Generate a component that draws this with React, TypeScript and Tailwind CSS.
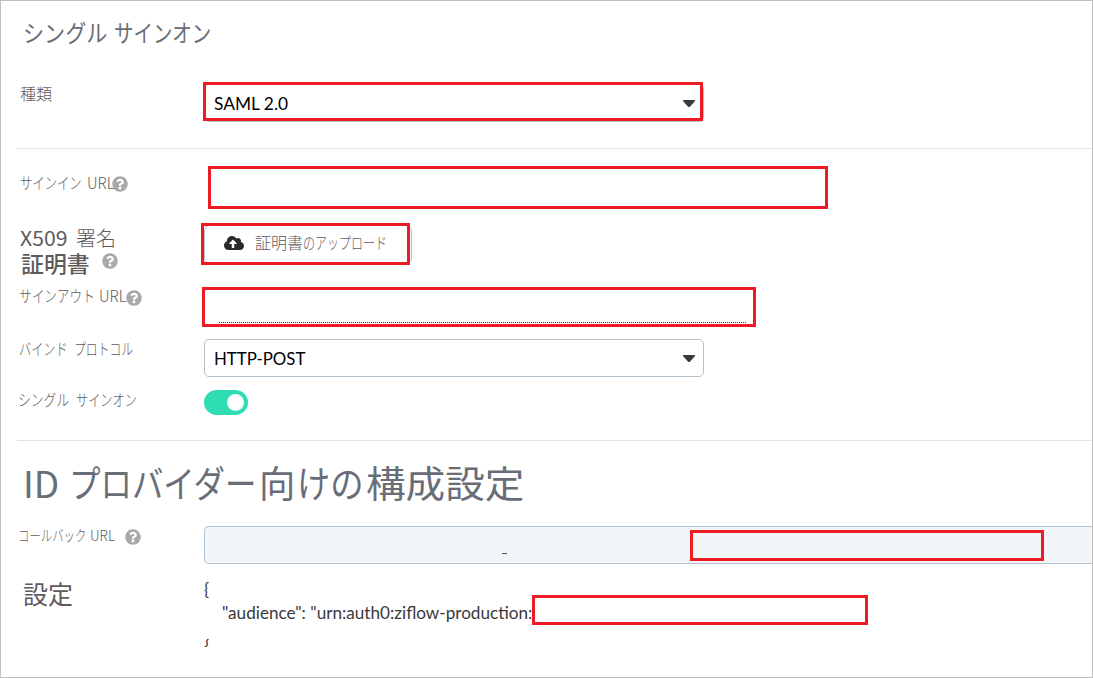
import type { ReactNode } from "react";
import { FaCloudUploadAlt, FaQuestionCircle } from "react-icons/fa";

function Text({ box, ink, children }: { box: string; ink: string; children: ReactNode }) {
  return (
    <span className={`block shrink-0 ${box}`}>
      <span className={`inline-block origin-left whitespace-nowrap ${ink}`}>{children}</span>
    </span>
  );
}

function Help({ className }: { className: string }) {
  return <FaQuestionCircle className={`size-4 shrink-0 text-[#a9a9a9] ${className}`} />;
}

function Caret() {
  return (
    <svg className="mt-px mr-2 h-[7px] w-3" viewBox="0 0 12 7" fill="#3a3a3c">
      <path d="M0 0h12v1L6.7 7H5.3L0 1z" />
    </svg>
  );
}

function Select({ value, ink, marked }: { value: string; ink: string; marked?: boolean }) {
  return (
    <div className="relative flex h-[38px] w-[500px] items-center justify-between rounded-[5px] border border-[#b3c1cd] bg-white pl-[9px] font-['Lato'] text-[17px] leading-[36px] font-normal text-black">
      <span className={`mt-px inline-block origin-left ${ink}`}>{value}</span>
      <Caret />
      {marked && <div className="absolute -top-[3px] -left-[2px] h-[39px] w-[500px] border-3 border-[#ed1c24]" />}
    </div>
  );
}

export default function App() {
  return (
    <main className="flex h-[678px] w-[1093px] flex-col overflow-hidden border border-[#c0c0c0] bg-white font-['Noto_Sans_CJK_JP','Liberation_Sans',sans-serif] font-light text-[#5f5a5c]">
      <h1 className="flex h-[82px] pt-[13px] pl-[22px] text-[24px] leading-9 font-normal text-[#696d78]">
        <Text box="w-[91px]" ink="scale-x-[0.88]">シングル</Text>
        <Text box="w-[110px]" ink="scale-x-[0.81]">サインオン</Text>
      </h1>

      <section className="ml-4 flex h-[66px] border-b border-[#dce4ea]">
        <div className="-mt-[2px] w-[187px] pl-[3px] text-[16px] leading-6">種類</div>
        <div className="pt-px">
          <Select value="SAML 2.0" ink="scale-x-[1.02]" marked />
        </div>
      </section>

      <section className="ml-4 flex h-[292px] flex-col border-b border-[#dce4ea]">
        <div className="flex h-[57px] pt-[17px]">
          <div className="flex w-[191px] pt-[4px] pl-[3px] text-[16px] leading-6">
            <Text box="w-[67px]" ink="scale-x-[0.77]">サインイン</Text>
            <Text box="w-[25px]" ink="scale-x-[0.94]">URL</Text>
            <Help className="mt-[6px]" />
          </div>
          <div className="h-[43px] w-[620px] border-3 border-[#ed1c24]" />
        </div>

        <div className="mt-[17px] flex h-[64px]">
          <div className="w-[184px] pt-[2px] pl-[3px]">
            <div className="flex h-[25px] text-[20px] leading-[26px]">
              <Text box="w-[56px]" ink="font-normal scale-x-[1.06]">X509</Text>
              <Text box="w-[42px]" ink="">署名</Text>
            </div>
            <div className="flex h-[27px] pl-px text-[22px] leading-[25px] font-medium">
              <Text box="w-[81px]" ink="scale-x-[1.04]">証明書</Text>
              <Help className="mt-[3px]" />
            </div>
          </div>
          <div className="relative pt-[2px] pl-[3px]">
            <button className="flex h-[39px] w-[208px] rounded-[6px] border border-[#b3c1cd] pl-[19px] text-[16px] leading-[33px] font-light">
              <FaCloudUploadAlt className="mt-[9px] mr-[11px] h-4 w-5 shrink-0 text-[#29292b]" />
              <Text box="w-[48px]" ink="">証明書</Text>
              <Text box="w-[84px]" ink="scale-x-[0.75]">のアップロード</Text>
            </button>
            <div className="absolute top-0 left-0 h-[42px] w-[209px] border-3 border-[#ed1c24]" />
          </div>
        </div>

        <div className="flex h-[52px]">
          <div className="flex w-[185px] pl-[2px] text-[16px] leading-[17px]">
            <Text box="w-[80px]" ink="scale-x-[0.79]">サインアウト</Text>
            <Text box="w-[27px]" ink="scale-x-[0.94]">URL</Text>
            <Help className="mt-[3px]" />
          </div>
          <div className="flex h-10 w-[554px] items-end border-3 border-[#ed1c24] pb-px pl-[14px]">
            <div className="h-px w-[528px] bg-[repeating-linear-gradient(90deg,#333_0_1px,transparent_1px_2px)]" />
          </div>
        </div>

        <div className="flex h-[51px]">
          <div className="flex w-[187px] pl-[2px] text-[16px] leading-[19px]">
            <Text box="w-[55px]" ink="scale-x-[0.76]">バインド</Text>
            <Text box="w-[61px]" ink="scale-x-[0.74]">プロトコル</Text>
          </div>
          <Select value="HTTP-POST" ink="scale-x-[0.99]" />
        </div>

        <div className="flex h-[50px]">
          <div className="flex w-[187px] pl-px text-[16px] leading-[19px]">
            <Text box="w-[58px]" ink="scale-x-[0.8]">シングル</Text>
            <Text box="w-[62px]" ink="scale-x-[0.76]">サインオン</Text>
          </div>
          <div className="flex h-[25px] w-11 items-center justify-end rounded-full bg-[#2fddb2] pr-1">
            <div className="size-[17px] rounded-full bg-white" />
          </div>
        </div>
      </section>

      <h2 className="flex h-[85px] shrink-0 pt-[14px] pl-[22px] text-[37px] leading-[54px] font-normal text-[#696d78]">
        <Text box="w-[46px]" ink="scale-x-[1.0]">ID</Text>
        <Text box="w-[190px]" ink="scale-x-[0.85]">プロバイダー</Text>
        <Text box="w-[38px]" ink="scale-x-[0.98]">向</Text>
        <Text box="w-[69px]" ink="scale-x-[0.9]">けの</Text>
        <Text box="w-[160px]" ink="scale-x-[1.07]">構成設定</Text>
      </h2>

      <section className="ml-4 flex h-[53px] shrink-0">
        <div className="flex w-[187px] pl-[1px] text-[15px] leading-[18px]">
          <Text box="w-[72px]" ink="scale-x-[0.76]">コールバック</Text>
          <Text box="w-[35px]" ink="scale-x-[0.91]">URL</Text>
          <Help className="mt-[3px]" />
        </div>
        <div className="relative h-[38px] flex-1 rounded-l-[5px] border border-r-0 border-[#b3c1cd] bg-[#f2f6f9]">
          <span className="absolute top-[26px] left-[297px] h-px w-[5px] bg-[#555]" />
          <div className="absolute top-[3px] left-[485px] h-[31px] w-[354px] border-3 border-[#ed1c24]" />
        </div>
      </section>

      <section className="ml-4 flex">
        <div className="w-[186px] pt-px pl-[6px] text-[25px] leading-[27px] font-normal">設定</div>
        <div className="-mt-px font-['Lato'] text-[17px] leading-[23px] font-normal text-[#39393c]">
          <div className="h-[23px] pl-px">{"{"}</div>
          <div className="relative flex h-[23px] pl-[19px]">
            <Text box="w-[314px]" ink="scale-x-[1.008]">"audience": "urn:auth0:ziflow-production:</Text>
            <div className="absolute -top-[6px] left-[329px] h-[30px] w-[336px] border-3 border-[#ed1c24] bg-white" />
          </div>
          <div className="mt-[15px] flex h-[8px] items-end overflow-hidden pl-px">
            <span className="-mb-[2px] leading-[20px]">{"}"}</span>
          </div>
        </div>
      </section>
    </main>
  );
}
